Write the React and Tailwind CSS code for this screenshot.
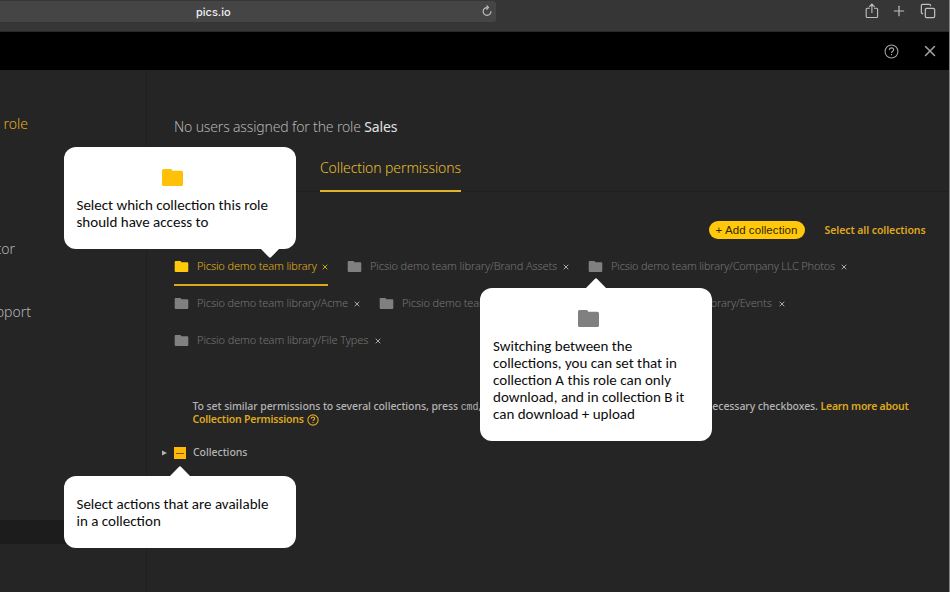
import { Copy, Plus, X } from "lucide-react";
import clsx from "clsx";

const collectionRows = [
  [
    { name: "Picsio demo team library", width: "w-[154px]", tracking: "tracking-[-0.13px]", active: true },
    { name: "Picsio demo team library/Brand Assets", width: "w-[222px]", tracking: "tracking-[-0.12px]" },
    { name: "Picsio demo team library/Company LLC Photos", width: "w-[259px]", tracking: "tracking-[-0.2px]" },
  ],
  [
    { name: "Picsio demo team library/Acme", width: "w-[186px]", tracking: "tracking-[-0.12px]" },
    { name: "Picsio demo team library/Design", width: "w-[195px]", tracking: "tracking-[-0.12px]" },
    { name: "Picsio demo team library/Events", width: "w-[192px]", tracking: "tracking-[-0.12px]" },
  ],
  [{ name: "Picsio demo team library/File Types", width: "w-[207px]", tracking: "tracking-[-0.1px]" }],
];

function FolderIcon({ className }) {
  return (
    <svg viewBox="0 0 21 17" fill="currentColor" className={className}>
      <path d="M1.5 0H8.6Q9.4 0 9.8.8L10.3 1.8H19.3Q21 1.8 21 3.4V15.4Q21 17 19.4 17H1.6Q0 17 0 15.4V1.5Q0 0 1.5 0Z" />
    </svg>
  );
}

function HelpIcon({ className }) {
  return (
    <svg viewBox="0 0 14 14" fill="none" stroke="currentColor" className={className}>
      <circle cx="7" cy="7" r="6" />
      <path d="M5 5.6C5 4.3 5.8 3.6 7 3.6s2 .8 2 1.8c0 1.2-2 1.5-2 2.9M7 9.4v1.2" />
    </svg>
  );
}

function BrowserBar() {
  return (
    <div className="flex h-8 shrink-0 border-b border-[#292929] bg-[#363636] text-[#c0c0c0]">
      <div className="mt-px flex h-[21px] w-[496px] items-center rounded-r-[3px] bg-[#454545]">
        <span className="mt-0.5 ml-[196px] font-[Inter,sans-serif] text-[11px] leading-none font-medium text-[#f0f0f0]">
          pics.io
        </span>
        <svg viewBox="0 0 10 12" className="mr-1 mb-0.5 ml-auto h-3 w-2.5" fill="none" stroke="currentColor" strokeWidth="1.1">
          <path d="M5.4 2.6A3.9 3.9 0 1 0 8.9 6.2M4.5.5 6.5 2.6 4.5 4.7" />
        </svg>
      </div>
      <div className="ml-auto flex h-[21px] items-center pr-[13px]">
        <svg viewBox="0 0 14 16" className="mr-3 h-4 w-[14px]" fill="none" stroke="currentColor" strokeWidth="1.1">
          <path d="M4.8 5.3H2.2Q1.2 5.3 1.2 6.3V13.4Q1.2 14.5 2.2 14.5H11.6Q12.6 14.5 12.6 13.4V6.3Q12.6 5.3 11.6 5.3H9M6.9 10V1.3M4.2 3.8 6.9 1.1 9.6 3.8" />
        </svg>
        <Plus className="mr-[13px] size-4" strokeWidth={1.8} />
        <Copy className="size-4" strokeWidth={1.8} />
      </div>
    </div>
  );
}

function CollectionChip({ name, width, tracking, active }) {
  return (
    <div
      className={clsx(
        "flex h-[38px] shrink-0 items-center border-b-2 whitespace-nowrap",
        width,
        active ? "border-[#d9a91b] text-[#e3b01b]" : "border-transparent text-[#757575]"
      )}
    >
      <FolderIcon
        className={clsx("mr-2 h-[11px] w-[15px] shrink-0", active ? "text-[#ffc80a]" : "text-[#808080]")}
      />
      <span className={clsx("text-[11px] font-light", tracking)}>{name}</span>
      <svg
        viewBox="0 0 6 6"
        className={clsx("mt-0.5 ml-auto size-[6px] shrink-0", !active && "text-[#b8b8b8]")}
        stroke="currentColor"
        strokeWidth="0.9"
      >
        <path d="M.7.7 5.3 5.3M5.3.7.7 5.3" />
      </svg>
    </div>
  );
}

function Callout({ className, arrow, children }) {
  return (
    <div
      className={clsx(
        "absolute w-[232px] rounded-xl bg-white px-[12.5px] font-[Carlito,Lato,sans-serif] text-[15px] leading-[17px] text-[#0c0c0c]",
        className
      )}
    >
      <svg viewBox="0 0 20 10" className={clsx("absolute h-[10px] w-5 text-white", arrow)} fill="currentColor">
        <path d="M0 10 8.8.9Q10-.3 11.2.9L20 10Z" />
      </svg>
      {children}
    </div>
  );
}

export default function App() {
  return (
    <div className="relative flex h-[592px] w-[950px] flex-col overflow-hidden border-r border-[#858585] bg-[#252525] font-['Noto_Sans',sans-serif] text-[#b4b4b4]">
      <BrowserBar />

      <header className="flex h-[38px] shrink-0 items-center justify-end bg-black pr-[10px] text-[#a5a5a5]">
        <HelpIcon className="mr-[22px] size-[15px]" />
        <X className="size-[18px]" strokeWidth={2} />
      </header>

      <div className="flex min-h-0 flex-1">
        <aside className="flex w-[147px] shrink-0 flex-col overflow-hidden border-r border-[#202020] text-[14px] leading-5 font-light">
          <div className="mt-[44px] flex w-[28px] justify-end whitespace-nowrap text-[#e0ae1b]">Create new role</div>
          <div className="mt-[105px] flex w-[15px] justify-end whitespace-nowrap">Contributor</div>
          <div className="mt-[43px] flex w-[31px] justify-end whitespace-nowrap">Support</div>
          <div className="mt-[198px] h-6 shrink-0 bg-[#1c1c1c]" />
        </aside>

        <main className="flex min-w-0 flex-1 flex-col pt-[47px]">
          <h1 className="ml-[27px] text-[14px] leading-5 font-light tracking-[-0.16px]">
            No users assigned for the role <span className="font-normal text-[#e2e2e2]">Sales</span>
          </h1>

          <div className="mt-[21px] flex h-[34px] shrink-0 border-b border-[#1f1f1f]">
            <div className="ml-[173px] h-[34px] w-[141px] border-b-2 border-[#dfb62b] text-[14px] leading-5 font-light tracking-[-0.1px] whitespace-nowrap text-[#e5be2d]">
              Collection permissions
            </div>
          </div>

          <div className="mt-[29px] flex h-[18px] shrink-0 items-center justify-end pr-[22.5px]">
            <button className="mr-5 h-[18px] w-24 rounded-full bg-[#ffc80a] text-center font-['Liberation_Sans',sans-serif] text-[11.5px] leading-[19px] tracking-[0.06px] whitespace-nowrap text-[#332800]">
              + Add collection
            </button>
            <a className="w-[102px] text-[10.5px] leading-[18px] font-semibold tracking-[-0.08px] whitespace-nowrap text-[#dfa81d]">
              Select all collections
            </a>
          </div>

          <div className="mt-[9px] ml-[27px] flex shrink-0 flex-col">
            {collectionRows.map((row) => (
              <div key={row[0].name} className="flex h-[37px] gap-[19px]">
                {row.map((item) => (
                  <CollectionChip key={item.name} {...item} />
                ))}
              </div>
            ))}
          </div>

          <p className="mt-[41px] ml-[45.5px] text-[10.5px] leading-[13px] font-medium tracking-[-0.08px] whitespace-nowrap">
            <span className="flex w-[716px]">
              <span>
                To set similar permissions to several collections, press{" "}
                <code className="font-['Liberation_Mono',monospace] text-[10px]">cmd</code>,
              </span>
              <span className="ml-auto">
                and check necessary checkboxes.{" "}
                <a className="font-semibold tracking-[-0.25px] text-[#dfa81d]">Learn more about</a>
              </span>
            </span>
            <a className="-mt-px flex items-center font-semibold tracking-[-0.2px] text-[#dfa81d]">
              Collection Permissions <HelpIcon className="ml-[3px] size-3 stroke-[1.3]" />
            </a>
          </p>

          <div className="mt-[18px] ml-[15px] flex h-[18px] shrink-0 items-center">
            <svg viewBox="0 0 5 6" className="mr-[7px] h-[6px] w-[5px]" fill="currentColor">
              <path d="M0 .5 5 3 0 5.5Z" />
            </svg>
            <span className="flex size-3 items-center justify-center bg-[#ffb90a]">
              <span className="h-px w-2 bg-[#7a5a0c]" />
            </span>
            <span className="ml-[7px] text-[10.5px] font-medium tracking-[-0.05px]">Collections</span>
          </div>
        </main>
      </div>

      <Callout className="top-[147px] left-16 h-[102px]" arrow="top-[101px] left-[196px] rotate-180">
        <FolderIcon className="mt-[22px] mb-[11px] ml-[85.5px] h-[17px] w-[21px] text-[#ffc107]" />
        Select which collection this role
        <br />
        should have access to
      </Callout>

      <Callout className="top-[288px] left-[480px] h-[153px] pl-[13px]" arrow="-top-[10px] left-[106px]">
        <FolderIcon className="mt-[22px] mb-[11px] ml-[85px] h-[17px] w-[21px] text-[#808080]" />
        Switching between the
        <br />
        collections, you can set that in
        <br />
        collection A this role can only
        <br />
        download, and in collection B it
        <br />
        can download + upload
      </Callout>

      <Callout className="top-[476px] left-16 h-[72px] pt-5" arrow="-top-[10px] left-[106px]">
        Select actions that are available
        <br />
        in a collection
      </Callout>
    </div>
  );
}
